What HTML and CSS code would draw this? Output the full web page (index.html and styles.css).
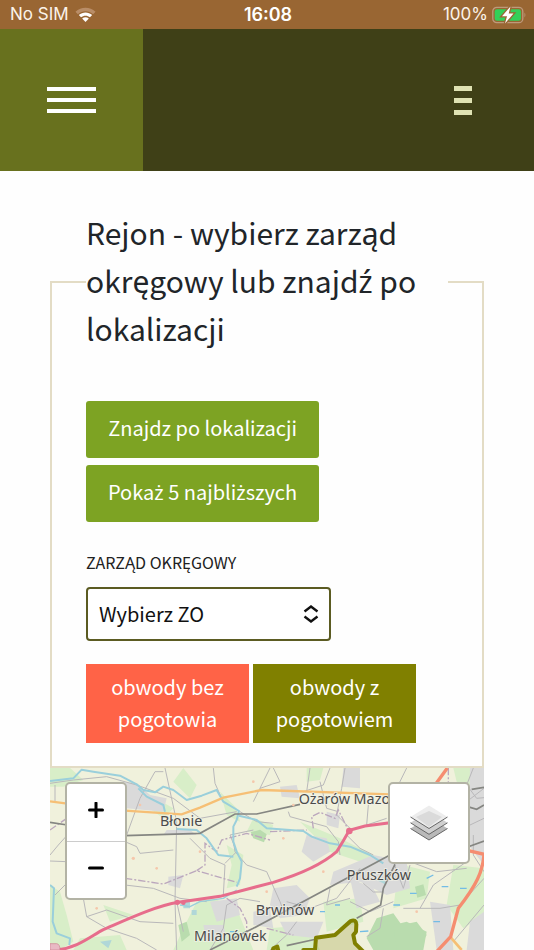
FILE: index.html
```html
<!DOCTYPE html>
<html lang="pl">
<head>
<meta charset="utf-8">
<meta name="viewport" content="width=device-width, initial-scale=1">
<title>Rejon - wybierz zarząd okręgowy</title>
<link rel="stylesheet" href="styles.css">
</head>
<body>
<div class="status">
  <div class="status-side">
    <span>No SIM</span>
    <svg class="wifi" viewBox="0 0 22 16" aria-hidden="true">
      <path d="M0.5 4.6C6.3-.9 15.7-.9 21.5 4.6L19 7.1C14.5 3 7.500 3 3 7.100Z" fill="#b98d67"/>
      <path d="M4 8.100C7.900 4.600 14.100 4.600 18 8.100L15.700 10.400C13 8.100 9 8.100 6.300 10.400Z" fill="#fff"/>
      <path d="M7.500 11.600C9.500 9.900 12.500 9.900 14.500 11.600L11 15.300Z" fill="#fff"/>
    </svg>
  </div>
  <time class="clock">16:08</time>
  <div class="status-side status-end">
    <span>100%</span>
    <svg class="battery" viewBox="0 0 34 18" aria-hidden="true">
      <rect x=".8" y="1.300" width="30" height="15.400" rx="4" fill="none" stroke="#bd9a7b" stroke-width="1.300"/>
      <path d="M32.500 6.500q1.800 2.500 0 5z" fill="#bd9a7b"/>
      <rect x="2.700" y="3.200" width="26.200" height="11.600" rx="2.300" fill="#33d058"/>
      <path d="M18.500.5L10 10.200H15L13 17.500L21.500 7.500H16.700Z" fill="#fff" stroke="#996633" stroke-width="2.600" paint-order="stroke"/>
    </svg>
  </div>
</div>
<header class="topbar">
  <button class="menu" type="button" aria-label="Menu"><i></i><i></i><i></i></button>
  <button class="more" type="button" aria-label="Opcje"><i></i><i></i><i></i></button>
</header>
<main class="page">
  <form>
  <fieldset class="panel">
    <legend>Rejon - wybierz zarząd okręgowy lub znajd<span class="accent">ź</span> po lokalizacji</legend>
    <div class="actions">
      <button class="action" type="button">Znajdz po lokalizacji</button>
      <button class="action" type="button">Poka<span class="accent">ż</span> 5 najbli<span class="accent">ż</span>szych</button>
    </div>
    <label class="caption" for="zo">ZARZĄD OKRĘGOWY</label>
    <div class="picker">
      <select id="zo"><option>Wybierz ZO</option></select>
      <svg class="chevrons" viewBox="0 0 16 18" aria-hidden="true"><path d="M1.500 6.500L8 1.500L14.500 6.500M1.500 11.500L8 16.500L14.500 11.500"/></svg>
    </div>
    <div class="tags">
      <button class="tag bez" type="button">obwody bez pogotowia</button>
      <button class="tag z" type="button">obwody z pogotowiem</button>
    </div>
  </fieldset>
  </form>
  <section class="map" aria-label="Mapa">
    <svg class="tiles" viewBox="30 39 1302 546" preserveAspectRatio="xMinYMin slice">
      <rect x="30" y="39" width="1302" height="560" fill="#f0f1dc"/>
      <g fill="#d8eec8">
        <path d="M30 39H90L130 75L70 95H30ZM30 390L60 410L80 480L100 560L60 585H30ZM270 80L330 120L400 160L370 190L300 140ZM430 39L470 90L450 130L400 80ZM540 110L590 160L600 200L560 180Z"/>
        <path d="M470 440L520 430L590 460L640 585H400L440 500ZM560 270L610 300L600 390L560 400L575 330ZM800 39H850L840 75L800 80ZM780 200L900 250L1000 300L990 330L870 290Z"/>
        <path d="M1090 330L1170 350L1160 430L1060 460L1070 380ZM850 440L960 430L970 500L860 530ZM1240 330L1332 340V480L1270 520L1220 450ZM1240 39H1332V100L1250 80Z"/>
        <path d="M640 190L700 210L690 240L620 230ZM190 450L280 480L210 500ZM120 550L240 540L260 585H100ZM690 520L800 510L840 585H680Z"/>
      </g>
      <g fill="#b9dcae">
        <path d="M1010 490L1060 475L1085 510L1130 500L1160 540L1130 585H1000L980 550Z"/>
        <path d="M1060 510L1100 500L1160 530L1150 585H1070Z"/>
        <path d="M632 232L660 224L680 238L672 262L640 250Z"/>
        <path d="M1125 395L1150 388L1158 420L1132 428ZM415 510L440 500L450 540L425 560Z"/>
      </g>
      <g fill="#dadada">
        <path d="M240 80L290 85L330 120L380 130L370 170L260 160L235 130ZM380 225H450L470 240H370ZM385 365L430 360L420 400L385 390Z"/>
        <path d="M700 400L770 390L810 430L790 480L720 490L690 450ZM800 240L860 250L870 290L820 320L785 290ZM910 39H960V100L905 95ZM720 95L770 90L780 130L725 125Z"/>
        <path d="M1000 300L1100 320L1110 400L1040 420L960 380L870 390L880 350ZM930 370L1000 400L1020 440L950 460ZM510 440L590 430L600 480L530 500ZM1290 39H1332V330L1285 270ZM1170 440L1230 450L1240 585H1190ZM1290 500L1332 470V585H1280ZM640 470L690 460L700 520L640 510Z"/>
        <path d="M140 120L230 100L235 140L180 150ZM490 510H550L560 550L500 560ZM860 170L900 180L895 220L860 210ZM720 500L850 500L830 550L740 540Z"/>
      </g>
      <g fill="#b0d7d8"><path d="M180 560L215 555L205 580ZM1010 375L1030 370L1040 390ZM430 440H450V460H430ZM455 465H470V480H455Z"/></g>
      <g fill="none" stroke="#b9b8ba" stroke-width="3">
        <path d="M30 85L100 75L200 65L290 90L400 130L480 190L590 170M45 90V140M260 240L300 130L345 50H370M375 39L410 200L405 440L410 585M520 39L525 85L545 130M130 430L140 485L200 465L300 500L400 505"/>
        <path d="M255 260L290 275L300 295L400 285M30 318L80 320M45 420L80 385M255 390L340 400L420 430L500 440M550 420L555 330L510 310L450 250M580 260L585 290L620 330L680 350L720 440L735 480"/>
        <path d="M555 325L590 290L570 240L640 225M745 170L750 185L860 215L895 260L900 300M915 39L905 100L890 180L930 220M985 150L980 210L1040 190M640 140L690 39M800 110L810 39"/>
        <path d="M970 385L1000 411H1030M1000 300L960 280L920 240M1060 320L1090 400L1110 330M1090 460L1200 460L1260 450L1332 370M870 400L860 450L930 430M770 500L740 540L690 585M1332 450L1240 560M1070 100L1100 39M30 300L55 270L82 240"/>
        <path d="M140 485L200 520L290 550L350 585M410 440L430 530M700 39L720 80L660 100M600 170L650 200L700 205M870 39L850 90L790 110M1110 320L1190 350L1280 340M1140 460L1180 390L1280 320M960 340L890 430L810 460L740 440"/>
        <path d="M840 80L860 160L895 170M660 440L600 430L560 450L550 520L510 585M930 440L990 470L1060 440M1280 140L1332 100M1290 210L1332 190M1300 39L1280 90L1310 130L1332 128M1300 240V300L1332 350M1030 460L1020 520L980 545"/>
      </g>
      <g fill="none" stroke="#bba7bd" stroke-width="4" stroke-dasharray="22 6 6 6">
        <path d="M255 370L370 387L470 347L590 382M470 347L495 330V265L530 290L545 255L620 235L690 255M820 220L815 185L840 172L885 190L895 165L920 215M30 225L80 190M560 430L600 460L620 500V540M680 520L760 540M690 230L800 225M1225 39V120"/>
      </g>
      <g fill="none" stroke="#9acfdb" stroke-width="6" stroke-linejoin="round">
        <path d="M30 78L100 70L125 44L160 50L240 62L290 88L310 105L345 112L370 95L400 105L440 135L485 122L530 105L550 140L597 168L590 195L580 215V260L590 290L605 320L600 370L590 395"/>
        <path d="M295 100L320 125L370 150L375 170M410 222L470 225L500 250L535 300L580 305M597 182L650 195L680 220L790 228L815 245L870 265L930 275L990 300L1030 325M30 390L42 400L38 500L50 535L90 550L88 570"/>
        <path d="M420 450L450 455L480 440L550 430L590 405" stroke-width="4"/>
      </g>
      <g stroke="#73bce5" stroke-width="4"><path d="M885 450H900M960 530L985 528M1160 370L1180 360M1060 450H1080M1205 395H1225M840 470H855M1260 400H1280M1110 415H1130M570 530H590M1180 500H1200"/></g>
      <g fill="none" stroke="#858682" stroke-width="5">
        <path d="M30 202L82 210M255 242L480 235L585 177H650L780 148M510 585L640 520L920 370L1050 300M950 490L1022 450L1030 400L1065 328M740 572L830 552M1285 275L1332 258M1283 155L1310 163L1332 150M1295 103L1332 97"/>
      </g>
      <path d="M30 139L82 146M255 167L425 178L480 158L550 128L665 105L1050 118" fill="none" stroke="#f6bf75" stroke-width="7"/>
      <path d="M1230 545L1265 585" fill="none" stroke="#f6bf75" stroke-width="8"/>
      <path d="M1222 39L1185 90M1285 287L1332 298C1328 350 1310 390 1255 460L1232 545L1190 590" fill="none" stroke="#f58d70" stroke-width="10"/>
      <path d="M50 585C110 580 150 545 190 524C260 494 350 452 415 442L540 424L700 382C790 355 850 325 890 290L910 257L928 226L975 213L1050 203" fill="none" stroke="#e76d8c" stroke-width="9"/>
      <g fill="#e76d8c"><circle cx="928" cy="228" r="10"/><circle cx="412" cy="442" r="8"/><circle cx="430" cy="443" r="7"/></g>
      <path d="M30 566H50Q60 567 60 585H30Z" fill="#e9b9c4" stroke="#cf7f92" stroke-width="2"/>
      <g fill="#f5c7ab"><circle cx="300" cy="150" r="4"/><circle cx="680" cy="410" r="4"/><circle cx="760" cy="150" r="4"/><circle cx="280" cy="310" r="5"/><circle cx="480" cy="290" r="4"/><circle cx="350" cy="340" r="4"/><circle cx="850" cy="350" r="4"/><circle cx="730" cy="250" r="4"/><circle cx="640" cy="80" r="4"/><circle cx="1130" cy="470" r="4"/><circle cx="170" cy="460" r="4"/></g>
      <path d="M695 600L700 580L712 575L718 600M790 585H825L828 548L885 540L932 498Q948 492 949 508L948 530L940 540L945 565L970 590V620H790Z" fill="#808000" fill-opacity=".22" stroke="#808000" stroke-width="12" stroke-linejoin="round"/>
      <g class="places">
        <text x="360" y="213">Błonie</text>
        <text x="776" y="146">Ożarów Mazowiecki</text>
        <text x="920" y="375">Pruszków</text>
        <text x="647" y="479">Brwinów</text>
        <text x="462" y="559">Milanówek</text>
      </g>
    </svg>
    <div class="zoom">
      <button type="button" aria-label="Przybliż"><svg viewBox="0 0 16 16"><path d="M1.500 8H14.500M8 1V15"/></svg></button>
      <button type="button" aria-label="Oddal"><svg viewBox="0 0 16 16"><path d="M1.500 8H14.500"/></svg></button>
    </div>
    <button class="layers" type="button" aria-label="Warstwy">
      <svg viewBox="0 0 38 36">
        <path d="M0.500 23.500L19 12L37.500 23.500L19 35Z" fill="#b9b9b9"/><path d="M0.500 23.500L19 35L37.500 23.500" fill="none" stroke="#666"/>
        <path d="M0.500 17.800L19 6L37.500 17.800L19 29.300Z" fill="#cfcfcf"/><path d="M0.500 17.800L19 29.300L37.500 17.800" fill="none" stroke="#666"/>
        <path d="M0.500 12L19 .5L37.500 12L19 23.500Z" fill="#ededed"/><path d="M6 12L19 6L32 12L19 22Z" fill="#dadada"/><path d="M0.500 12L19 23.500L37.500 12" fill="none" stroke="#666"/>
      </svg>
    </button>
  </section>
</main>
</body>
</html>
```
FILE: styles.css
```css
* { box-sizing: border-box; }
body {
  margin: 0;
  min-height: 100vh;
  display: flex;
  flex-direction: column;
  background: #fefefe;
  color: #212529;
  font-family: "Noto Sans CJK SC", "Noto Sans", sans-serif;
}
button, select { font: inherit; border: 0; margin: 0; padding: 0; }
.accent { font-family: "Noto Sans", sans-serif; line-height: 1; }

.status {
  display: flex;
  align-items: center;
  height: 29px;
  padding: 0 8px 0 10px;
  background: #996633;
  color: #fbf3ea;
  font: 17px/29px Inter, sans-serif;
}
.status-side { flex: 1; display: flex; align-items: center; gap: 6px; }
.status-end { justify-content: flex-end; gap: 4px; }
.clock { font-size: 18px; font-weight: 600; color: #fff; }
.wifi { width: 21px; height: 16px; }
.battery { width: 34px; height: 18px; }

.topbar {
  display: flex;
  justify-content: space-between;
  height: 142px;
  background: #3f4017;
}
.menu, .more { display: flex; flex-direction: column; align-items: center; justify-content: center; }
.menu { width: 143px; gap: 7px; background: #68711e; }
.menu i { width: 49px; height: 4px; background: #fff; }
.more { width: 143px; gap: 7px; background: none; }
.more i { width: 18px; height: 5px; background: #dfe2b3; }

.page { flex: 1; display: flex; flex-direction: column; padding: 37px 50px 0; }
.panel {
  margin: 0;
  min-width: 0;
  padding: 45px 34px 23px;
  border: 2px solid #e3dcc5;
}
.panel legend { width: 100%; padding: 0 0 4px; font-size: 30px; line-height: 48px; }
.actions { display: grid; width: max-content; gap: 7px; }
.action {
  padding: 0 22px 3px;
  border-radius: 3px;
  background: #7da323;
  color: #fff;
  font-size: 20px;
  line-height: 54px;
}
.caption { display: block; margin: 28px 0 13px; color: #212121; font-size: 16px; line-height: 24px; }
.picker { position: relative; width: 245px; margin-bottom: 23px; }
.picker select {
  appearance: none;
  display: block;
  width: 100%;
  height: 54px;
  padding: 0 11px 2px;
  border: 2px solid #5b5b22;
  border-radius: 4px;
  background: #fff;
  color: #111;
  font-size: 20px;
}
.chevrons {
  position: absolute;
  top: 18px;
  right: 12px;
  width: 16px;
  height: 18px;
  fill: none;
  stroke: #111;
  stroke-width: 2.4;
  pointer-events: none;
}
.tags { display: flex; gap: 4px; }
.tag { width: 163px; padding: 7px 20px 8px; color: #fff; font-size: 20px; line-height: 32px; }
.bez { background: #ff6347; }
.z { background: #808000; }

.map { position: relative; flex: 1; min-height: 180px; overflow: hidden; }
.tiles { position: absolute; inset: 0; width: 100%; height: 100%; }
.places {
  font-family: "Noto Sans", sans-serif;
  font-size: 43px;
  fill: #4b4b4b;
  stroke: #f2f2e8;
  stroke-width: 6px;
  stroke-opacity: .7;
  paint-order: stroke;
}
.zoom, .layers {
  position: absolute;
  top: 14px;
  border: 2px solid #b3b3a5;
  border-radius: 5px;
  background: #fff;
}
.zoom { left: 15px; width: 62px; }
.zoom button { display: grid; place-items: center; width: 100%; height: 57px; padding-bottom: 5px; background: none; }
.zoom button + button { border-top: 1px solid #ccc; }
.zoom svg { width: 16px; height: 16px; stroke: #000; stroke-width: 3; stroke-linecap: round; }
.layers { right: 14px; display: grid; place-items: center; width: 82px; height: 82px; }
.layers svg { width: 38px; height: 36px; }
```
